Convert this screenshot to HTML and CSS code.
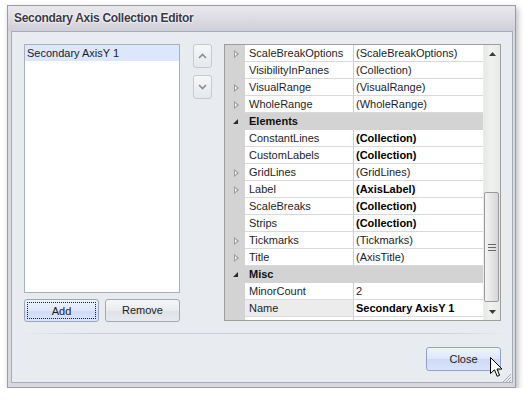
FILE: index.html
```html
<!DOCTYPE html>
<html>
<head>
<meta charset="utf-8">
<link rel="stylesheet" href="styles.css">
</head>
<body>
<div class="window">
  <div class="titlebar">Secondary Axis Collection Editor</div>
  <div class="client">
    <div class="main">
      <div class="leftcol">
        <div class="listbox">
          <div class="item sel">Secondary AxisY 1</div>
        </div>
        <div class="btnrow">
          <div class="btn focus"><span class="focusrect">Add</span></div>
          <div class="btn">Remove</div>
        </div>
      </div>
      <div class="arrows">
        <div class="arrow"><svg width="9" height="6" viewBox="0 0 9 6"><path d="M1 5 L4.5 1.5 L8 5" fill="none" stroke="#8c8c8c" stroke-width="1.6"/></svg></div>
        <div class="arrow"><svg width="9" height="6" viewBox="0 0 9 6"><path d="M1 1 L4.5 4.5 L8 1" fill="none" stroke="#8c8c8c" stroke-width="1.6"/></svg></div>
      </div>
      <div class="grid">
        <div class="rows">
          <div class="row"><div class="gut"><span class="exp"></span></div><div class="name">ScaleBreakOptions</div><div class="val">(ScaleBreakOptions)</div></div>
          <div class="row"><div class="gut"></div><div class="name">VisibilityInPanes</div><div class="val">(Collection)</div></div>
          <div class="row"><div class="gut"><span class="exp"></span></div><div class="name">VisualRange</div><div class="val">(VisualRange)</div></div>
          <div class="row"><div class="gut"><span class="exp"></span></div><div class="name">WholeRange</div><div class="val">(WholeRange)</div></div>
          <div class="row cat"><div class="gut"><span class="col"></span></div><div class="catname">Elements</div></div>
          <div class="row"><div class="gut"></div><div class="name">ConstantLines</div><div class="val b">(Collection)</div></div>
          <div class="row"><div class="gut"></div><div class="name">CustomLabels</div><div class="val b">(Collection)</div></div>
          <div class="row"><div class="gut"><span class="exp"></span></div><div class="name">GridLines</div><div class="val">(GridLines)</div></div>
          <div class="row"><div class="gut"><span class="exp"></span></div><div class="name">Label</div><div class="val b">(AxisLabel)</div></div>
          <div class="row"><div class="gut"></div><div class="name">ScaleBreaks</div><div class="val b">(Collection)</div></div>
          <div class="row"><div class="gut"></div><div class="name">Strips</div><div class="val b">(Collection)</div></div>
          <div class="row"><div class="gut"><span class="exp"></span></div><div class="name">Tickmarks</div><div class="val">(Tickmarks)</div></div>
          <div class="row"><div class="gut"><span class="exp"></span></div><div class="name">Title</div><div class="val">(AxisTitle)</div></div>
          <div class="row cat"><div class="gut"><span class="col"></span></div><div class="catname">Misc</div></div>
          <div class="row"><div class="gut"></div><div class="name">MinorCount</div><div class="val">2</div></div>
          <div class="row selrow"><div class="gut"></div><div class="name">Name</div><div class="val b">Secondary AxisY 1</div></div>
          <div class="row tail"><div class="gut"></div><div class="name"></div><div class="val"></div></div>
        </div>
        <div class="scrollbar">
          <div class="sbtn"><svg width="7" height="4" viewBox="0 0 7 4"><path d="M0 4 L3.5 0 L7 4 Z" fill="#3c3c3c"/></svg></div>
          <div class="track">
            <div class="thumb"><svg width="8" height="7" viewBox="0 0 8 7"><path d="M0 0.5H8M0 3.5H8M0 6.5H8" stroke="#6a6a6a" stroke-width="1"/></svg></div>
          </div>
          <div class="sbtn"><svg width="7" height="4" viewBox="0 0 7 4"><path d="M0 0 L3.5 4 L7 0 Z" fill="#3c3c3c"/></svg></div>
        </div>
      </div>
    </div>
    <div class="sep"></div>
    <div class="footer">
      <div class="btn def">Close</div>
    </div>
  </div>
  <svg class="grip" width="12" height="12" viewBox="0 0 12 12"><path d="M11 3 L3 11 M11 6 L6 11 M11 9 L9 11" stroke="#a8a8b0" stroke-width="1"/></svg>
  <svg class="cursor" width="13" height="21" viewBox="0 0 13 21"><path d="M0.5 0.5 L0.5 16.5 L4.5 12.8 L7.2 19.3 L9.6 18.3 L7 12 L12 12 Z" fill="#fff" stroke="#000" stroke-width="1" stroke-linejoin="miter"/></svg>
</div>
</body>
</html>
```
FILE: styles.css
```css
* { box-sizing: border-box; }
body {
  margin: 0;
  background: #ffffff;
  font-family: "Liberation Sans", Arial, sans-serif;
  font-size: 11px;
  color: #1e1e1e;
}
.window {
  position: relative;
  margin: 5px 0 0 7px;
  width: 509px;
  height: 383px;
  border: 1px solid #9c9ca8;
  background: #d9d8e1;
  padding: 0 2px 4px 3px;
  display: flex;
  flex-direction: column;
  box-shadow: 2px 3px 6px rgba(0,0,0,0.28);
}
.titlebar {
  height: 25px;
  line-height: 25px;
  margin: 0 -2px 0 -3px;
  padding-left: 6px;
  background: linear-gradient(#e9e9ed, #d0cfd9);
  font-weight: bold;
  font-size: 12px;
  letter-spacing: -0.3px;
  color: #3a3a48;
  text-shadow: 0 0 3px #ffffff, 0 0 2px #ffffff;
}
.client {
  flex: 1;
  border: 1px solid #a7adb6;
  background: #e8ecf0;
  display: flex;
  flex-direction: column;
}
.main {
  display: flex;
  padding: 12px 11px 0 12px;
}
.leftcol {
  width: 156px;
  display: flex;
  flex-direction: column;
}
.listbox {
  height: 249px;
  border: 1px solid #a9b0b8;
  background: #ffffff;
}
.item {
  height: 16px;
  line-height: 16px;
  padding-left: 2px;
  color: #1a1a2e;
}
.item.sel { background: #dde7fb; }
.btnrow {
  display: flex;
  justify-content: space-between;
  margin-top: 6px;
}
.btn {
  width: 75px;
  height: 23px;
  border: 1px solid #a3a9b2;
  border-radius: 3px;
  background: linear-gradient(#f6f7f8, #e9ebee 50%, #dfe2e6 51%, #e8eaed);
  text-align: center;
  line-height: 21px;
  color: #202020;
  font-size: 11px;
}
.btn.focus {
  background: linear-gradient(#eef3fd, #dde7fb 50%, #cfdcf8 51%, #dbe4fa);
  border-color: #9aa6b8;
  padding: 2px;
}
.focusrect {
  display: block;
  height: 17px;
  line-height: 16px;
  border: 1px dotted #202020;
}
.arrows {
  margin-left: 13px;
  width: 19px;
  display: flex;
  flex-direction: column;
  gap: 7px;
}
.arrow {
  height: 24px;
  border: 1px solid #c6cace;
  border-radius: 3px;
  background: linear-gradient(#f5f7f9, #e5e8ec);
  display: flex;
  align-items: center;
  justify-content: center;
}
.grid {
  margin-left: 12px;
  width: 277px;
  height: 277px;
  border: 1px solid #9e9e9e;
  background: #ffffff;
  display: flex;
}
.rows {
  width: 258px;
  display: flex;
  flex-direction: column;
}
.row {
  display: flex;
  height: 17px;
}
.row.tail { height: 3px; flex: 1; }
.gut {
  width: 20px;
  background: #d3d3d3;
  position: relative;
}
.name {
  width: 108px;
  border-bottom: 1px solid #d9d9d9;
  padding-left: 4px;
  line-height: 17px;
  overflow: hidden;
  white-space: nowrap;
  color: #1e1e28;
}
.val {
  width: 130px;
  border-left: 1px solid #d0d0d0;
  border-bottom: 1px solid #d9d9d9;
  padding-left: 2px;
  line-height: 17px;
  white-space: nowrap;
  overflow: hidden;
  color: #1c1c30;
}
.tail .name, .tail .val { border-bottom: none; }
.val.b { font-weight: bold; color: #000; }
.selrow .name { background: #ececec; }
.cat { background: #d3d3d3; }
.catname {
  flex: 1;
  padding-left: 4px;
  line-height: 17px;
  font-weight: bold;
  color: #101010;
}
.exp {
  position: absolute;
  left: 9px;
  top: 5px;
  width: 0;
  height: 0;
  border-left: 5px solid #9a9a9a;
  border-top: 4px solid transparent;
  border-bottom: 4px solid transparent;
}
.exp::after {
  content: "";
  position: absolute;
  left: -4px;
  top: -2px;
  width: 0;
  height: 0;
  border-left: 2.5px solid #ffffff;
  border-top: 2px solid transparent;
  border-bottom: 2px solid transparent;
}
.col {
  position: absolute;
  left: 8px;
  top: 6px;
  width: 0;
  height: 0;
  border-left: 5px solid transparent;
  border-bottom: 5px solid #2a2a2a;
}
.scrollbar {
  width: 17px;
  display: flex;
  flex-direction: column;
  background: linear-gradient(90deg, #e6e8e6, #f0f2f0 40%, #e8eae8);
  border-left: 1px solid #ececec;
}
.sbtn {
  height: 17px;
  display: flex;
  align-items: center;
  justify-content: center;
}
.track {
  flex: 1;
  display: flex;
  flex-direction: column;
  padding-top: 130px;
}
.thumb {
  width: 15px;
  height: 110px;
  border: 1px solid #9a9a9a;
  border-radius: 2px;
  background: linear-gradient(90deg, #f4f4f4, #e6e6e6 50%, #d6d6d6);
  display: flex;
  align-items: center;
  justify-content: center;
}
.sep {
  margin: 11px 6px 0 8px;
  height: 1px;
  background: linear-gradient(90deg, rgba(200,205,212,0), #c8cdd4 15%, #c8cdd4 85%, rgba(200,205,212,0));
}
.footer {
  display: flex;
  justify-content: flex-end;
  padding: 13px 11px 0 0;
}
.btn.def {
  height: 24px;
  line-height: 22px;
  border-color: #8ea2c2;
  background: linear-gradient(#eef3fd, #dde7fb 50%, #cddaf7 51%, #d9e3fa);
}
.grip {
  position: absolute;
  right: 3px;
  bottom: 4px;
}
.cursor {
  position: absolute;
  left: 482px;
  top: 351px;
}
```
